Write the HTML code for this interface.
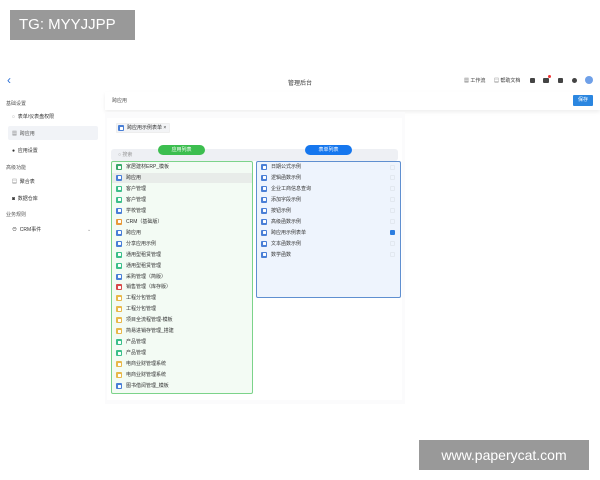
<!DOCTYPE html>
<html><head><meta charset="utf-8"><style>
*{margin:0;padding:0;box-sizing:border-box}
body{width:600px;height:480px;background:#fff;position:relative;overflow:hidden;font-family:"Liberation Sans","Noto Sans CJK SC",sans-serif;color:#333}
.a{position:absolute;white-space:nowrap}
.s{font-size:5px;line-height:6px}
.ic{position:absolute;width:6px;height:6px;border-radius:1px}
.ic::after{content:"";position:absolute;left:1.5px;top:1.5px;width:3px;height:3px;background:#fff;border-radius:.5px}
</style></head><body>
<div class="a" style="left:10px;top:10px;width:125px;height:30px;background:#999;color:#fff;font-size:15px;line-height:30px;padding-left:9px">TG: MYYJJPP</div>
<div class="a" style="left:419px;top:440px;width:170px;height:30px;background:#999;color:#fff;font-size:14px;line-height:30px;text-align:center">www.paperycat.com</div>

<div class="a" style="left:7px;top:74px;font-size:12px;color:#2a6fd6;line-height:12px">‹</div>
<div class="a" style="left:288px;top:78px;font-size:6px;color:#333">管理后台</div>
<div class="a s" style="left:464px;top:78px">▦ 工作流</div>
<div class="a s" style="left:494px;top:78px">▤ 帮助文档</div>
<div class="a" style="left:530px;top:78px;width:5px;height:5px;background:#444;border-radius:1px"></div>
<div class="a" style="left:543px;top:78px;width:6px;height:5px;background:#444;border-radius:1px"></div>
<div class="a" style="left:548px;top:75px;width:3px;height:3px;background:#e33;border-radius:50%"></div>
<div class="a" style="left:558px;top:78px;width:5px;height:5px;background:#444;border-radius:1px"></div>
<div class="a" style="left:572px;top:78px;width:5px;height:5px;background:#444;border-radius:50%"></div>
<div class="a" style="left:585px;top:76px;width:8px;height:8px;background:#6fa0e8;border-radius:50%"></div>

<div class="a s" style="left:6px;top:101px;color:#555">基础设置</div>
<div class="a s" style="left:12px;top:114px">◌&nbsp; 表单/仪表盘权限</div>
<div class="a" style="left:8px;top:126px;width:90px;height:14px;background:#f1f3f7;border-radius:2px"></div>
<div class="a s" style="left:12px;top:131px;color:#555">▦&nbsp; 跨应用</div>
<div class="a s" style="left:12px;top:148px">●&nbsp; 应用设置</div>
<div class="a s" style="left:6px;top:165px;color:#555">高级功能</div>
<div class="a s" style="left:12px;top:179px">▤&nbsp; 聚合表</div>
<div class="a s" style="left:12px;top:196px">◙&nbsp; 数据仓库</div>
<div class="a s" style="left:6px;top:212px;color:#555">业务规则</div>
<div class="a s" style="left:12px;top:227px">⊖&nbsp; CRM事件</div>
<div class="a s" style="left:87px;top:227px;color:#999">⌄</div>

<div class="a" style="left:105px;top:92px;width:495px;height:18px;background:#fff;box-shadow:0 2px 4px #eee"></div>
<div class="a s" style="left:112px;top:98px;color:#555">跨应用</div>
<div class="a" style="left:573px;top:95px;width:20px;height:11px;background:#2b86e0;border-radius:1px;color:#fff;font-size:5px;line-height:11px;text-align:center">保存</div>
<div class="a" style="left:105px;top:112px;width:300px;height:292px;background:#fbfbfc"></div>
<div class="a" style="left:107px;top:118px;width:295px;height:282px;background:#fff"></div>

<div class="a" style="left:116px;top:123px;width:54px;height:10px;background:#f3f4f6;border:1px solid #eee;border-radius:1px"></div>
<div class="ic" style="left:118px;top:125px;background:#4a7fd6"></div>
<div class="a s" style="left:127px;top:125px">跨应用示例表单 ×</div>

<div class="a" style="left:111px;top:149px;width:287px;height:12px;background:#eef0f4;border-radius:3px"></div>
<div class="a s" style="left:118px;top:152px;color:#999">○ 搜索</div>
<div class="a" style="left:158px;top:145px;width:47px;height:10px;background:#3cbe4f;border-radius:5px;color:#fff;font-size:5px;line-height:10px;text-align:center">应用列表</div>
<div class="a" style="left:305px;top:145px;width:47px;height:10px;background:#1677ee;border-radius:5px;color:#fff;font-size:5px;line-height:10px;text-align:center">表单列表</div>

<div class="a" style="left:111px;top:161px;width:142px;height:233px;background:#f3fbf4;border:1px solid #7cd38a;border-radius:2px">
<div class="a" style="left:0;top:11px;width:140px;height:10px;background:#e8ece9"></div>
</div>
<div class="a" style="left:256px;top:161px;width:145px;height:137px;background:#eef4fd;border:1px solid #5f8fd0;border-radius:2px"></div>

<div id="L"></div>
<script>
var L=[["家居建材ERP_模板","#3aa86a"],["跨应用","#4a7fd6"],["客户管理","#3cbf8a"],["客户管理","#3cbf8a"],["学校管理","#4a7fd6"],["CRM（基础版）","#e89a3a"],["跨应用","#4a7fd6"],["分享应用示例","#4a7fd6"],["通用型租赁管理","#3cbf8a"],["通用型租赁管理","#3cbf8a"],["采购管理（简版）","#4a7fd6"],["销售管理（库存版）","#d84a4a"],["工程分包管理","#e8b84a"],["工程分包管理","#e8b84a"],["项目全流程管理-模板","#e8b84a"],["简易进销存管理_搭建","#e8b84a"],["产品管理","#3cbf8a"],["产品管理","#3cbf8a"],["电商业财管理系统","#e8b84a"],["电商业财管理系统","#e8b84a"],["图书借阅管理_模板","#4a7fd6"]];
var R=["日期公式示例","逻辑函数示例","企业工商信息查询","添加字段示例","按钮示例","高级函数示例","跨应用示例表单","文本函数示例","数学函数"];
var h="";
L.forEach(function(x,i){var y=164+i*10.95;h+='<div class="ic" style="left:116px;top:'+y+'px;background:'+x[1]+'"></div><div class="a s" style="left:126px;top:'+y+'px">'+x[0]+'</div>';});
R.forEach(function(x,i){var y=164+i*10.95;h+='<div class="ic" style="left:261px;top:'+y+'px;background:#4a7fd6"></div><div class="a s" style="left:271px;top:'+y+'px">'+x+'</div>';
h+='<div class="a" style="left:390px;top:'+(y+.5)+'px;width:5px;height:5px;border:1px solid '+(i==6?'#2b7de0;background:#2b7de0':'#e2e8f0')+';border-radius:1px"></div>';});
document.getElementById("L").outerHTML=h;
</script>
</body></html>
